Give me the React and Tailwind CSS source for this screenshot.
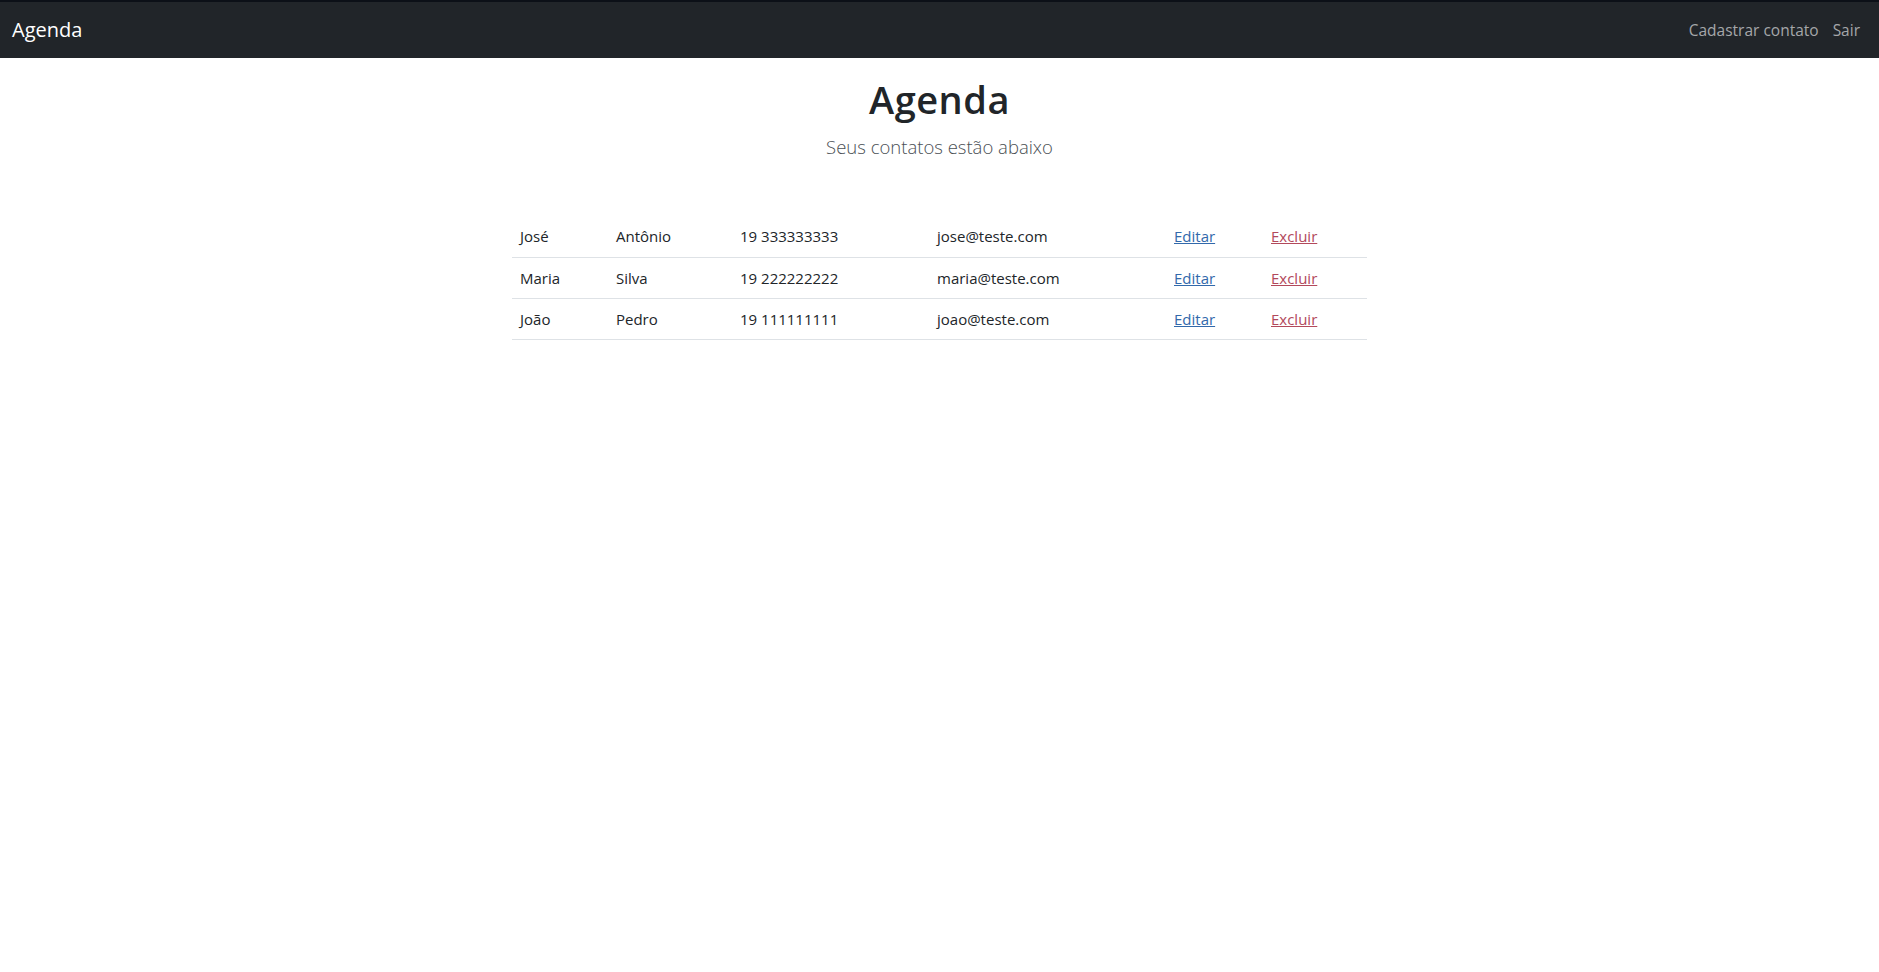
const contatos = [
  { nome: 'José', sobrenome: 'Antônio', telefone: '19 333333333', email: 'jose@teste.com' },
  { nome: 'Maria', sobrenome: 'Silva', telefone: '19 222222222', email: 'maria@teste.com' },
  { nome: 'João', sobrenome: 'Pedro', telefone: '19 111111111', email: 'joao@teste.com' },
];

const App = () => {
  return (
    <div className="min-h-screen bg-white text-[#212529] font-['Open_Sans',sans-serif]">
      {/* Navbar */}
      <nav className="h-[58px] bg-[#212529] border-t-2 border-[#0c1017] flex items-center justify-between pl-3 pr-[19px]">
        <a className="text-[20px] text-white">Agenda</a>
        <div className="flex items-center gap-[14px] text-[15.5px] text-[#a5a7a9] pt-[2px]">
          <a>Cadastrar contato</a>
          <a>Sair</a>
        </div>
      </nav>

      {/* Header */}
      <section className="text-center pt-[19px]">
        <h1 className="text-[38px] font-semibold leading-[1.2] tracking-[0.5px]">Agenda</h1>
        <p className="mt-[10px] text-[18.5px] font-light text-[#4a4f54] leading-[1.5]">
          Seus contatos estão abaixo
        </p>
      </section>

      {/* Contatos */}
      <section className="w-[855px] mx-auto mt-[56px]">
        <table className="w-full text-[15px] border-collapse">
          <tbody>
            {contatos.map((c) => (
              <tr key={c.email} className="h-[41px] border-b border-[#dee2e6]">
                <td className="w-[96px] px-2">{c.nome}</td>
                <td className="w-[124px] px-2">{c.sobrenome}</td>
                <td className="w-[197px] px-2">{c.telefone}</td>
                <td className="w-[237px] px-2">{c.email}</td>
                <td className="w-[97px] px-2">
                  <a href="#" className="text-[#3269ab] underline">Editar</a>
                </td>
                <td className="px-2">
                  <a href="#" className="text-[#b2495b] underline">Excluir</a>
                </td>
              </tr>
            ))}
          </tbody>
        </table>
      </section>
    </div>
  );
};

export default App;
